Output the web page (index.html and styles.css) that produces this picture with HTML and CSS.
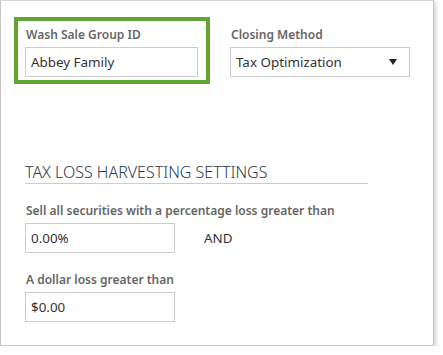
FILE: index.html
```html
<!DOCTYPE html>
<html>
    <head lang="en">
        <meta charset="UTF-8">
        <title>Wash Sale Settings</title>
        <link rel="stylesheet" href="styles.css">
    </head>
    <body>
        <div id="panel">
            <div class="top-row">
                <div class="field highlight">
                    <label>Wash Sale Group ID</label>
                    <div class="box wide">Abbey Family</div>
                </div>
                <div class="field">
                    <label>Closing Method</label>
                    <div class="box select">
                        <span>Tax Optimization</span>
                        <span class="arrow"></span>
                    </div>
                </div>
            </div>
            <div class="section">
                <h2>TAX LOSS HARVESTING SETTINGS</h2>
                <div class="field">
                    <label>Sell all securities with a percentage loss greater than</label>
                    <div class="inline">
                        <div class="box narrow">0.00%</div>
                        <span class="and">AND</span>
                    </div>
                </div>
                <div class="field">
                    <label>A dollar loss greater than</label>
                    <div class="box narrow">$0.00</div>
                </div>
            </div>
        </div>
    </body>
</html>
```

FILE: styles.css
```css
*{
    margin: 0;
    padding: 0;
    box-sizing: border-box;
}
body{
    background: #fff;
    font-family: "Noto Sans", "Open Sans", sans-serif;
    font-size: 13px;
    color: #333;
}
#panel{
    width: 434px;
    height: 346px;
    border: 1px solid #c6c6c6;
    border-top-color: #d8d8d8;
    box-shadow: 2px 2px 4px rgba(0,0,0,.18);
    padding: 16px 0 0 13px;
}
.top-row{
    display: flex;
    gap: 20px;
}
.highlight{
    border: 4px solid #62a331;
    padding: 4px 8px 3px 7px;
}
.top-row .field:last-child{
    padding-top: 8px;
}
label{
    display: block;
    color: #666;
    font-weight: 600;
    font-size: 12px;
    line-height: 20px;
    margin-bottom: 2px;
    padding-left: 1px;
}
.box{
    height: 30px;
    border: 1px solid #ccc;
    padding: 0 5px;
    line-height: 28px;
    font-size: 13.4px;
    color: #333;
}
.wide{
    width: 173px;
}
.select{
    width: 180px;
    display: flex;
    justify-content: space-between;
    align-items: center;
    padding-right: 12px;
}
.arrow{
    width: 0;
    height: 0;
    border-left: 4px solid transparent;
    border-right: 4px solid transparent;
    border-top: 6px solid #222;
}
.section{
    padding: 78px 0 0 11px;
}
h2{
    width: 343px;
    font-size: 16px;
    font-weight: 300;
    color: #2f3a48;
    border-bottom: 1px solid #ccc;
    padding-bottom: 1px;
    margin-bottom: 17px;
    line-height: 20px;
}
.section .field{
    margin-bottom: 17px;
}
.inline{
    display: flex;
    align-items: center;
    gap: 29px;
}
.narrow{
    width: 150px;
}
.and{
    font-size: 13.4px;
    color: #333;
}
```
